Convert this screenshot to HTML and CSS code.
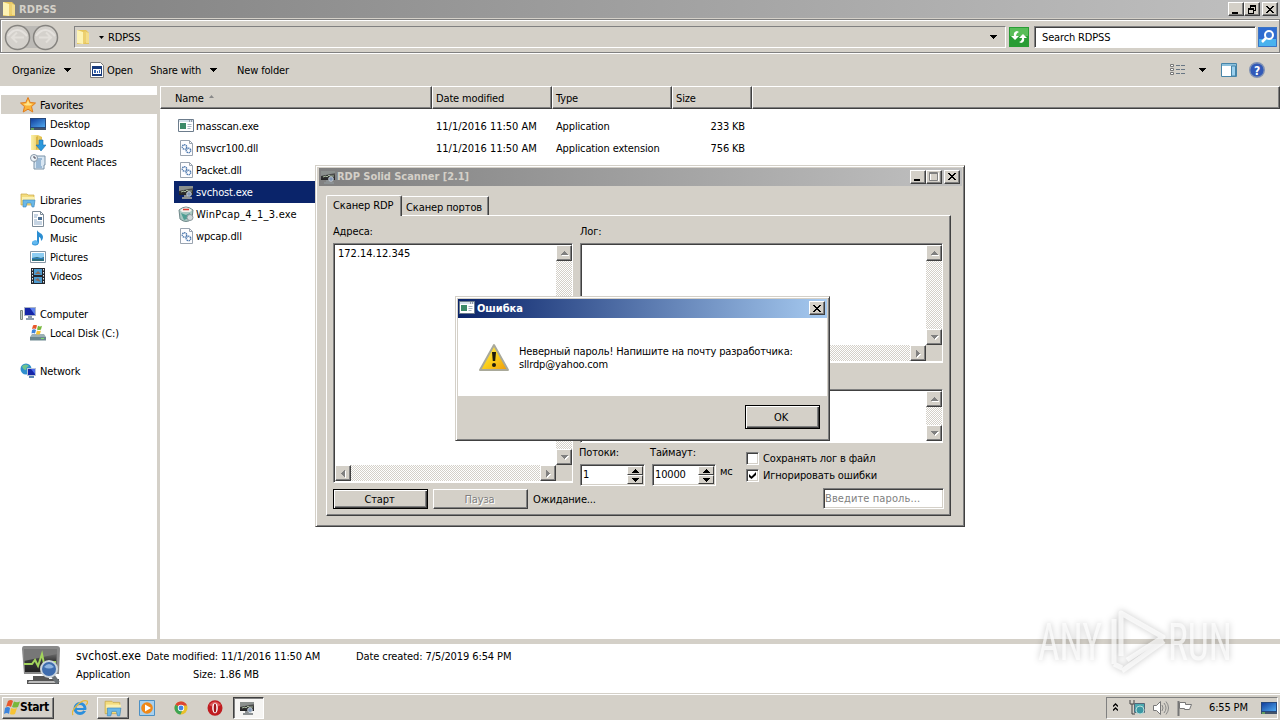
FILE: index.html
```
<!DOCTYPE html>
<html lang="en">
<head>
    <meta charset="UTF-8">
    <title>RDPSS</title>
    <link rel="stylesheet" href="styles.css">
</head>
<body>
    <!-- Shared icons -->
    <svg class="defs" width="0" height="0">
        <linearGradient id="gold" x1="0" y1="0" x2="1" y2="0"><stop offset="0" stop-color="#fbf0a8"/><stop offset="1" stop-color="#e2bd48"/></linearGradient>
        <linearGradient id="blue" x1="0" y1="0" x2="1" y2="1"><stop offset="0" stop-color="#123f9e"/><stop offset="1" stop-color="#4fa8ee"/></linearGradient>
        <linearGradient id="dark" x1="0" y1="0" x2="0" y2="1"><stop offset="0" stop-color="#8d8d8d"/><stop offset=".5" stop-color="#3a3a3a"/><stop offset="1" stop-color="#222"/></linearGradient>
        <symbol id="folder" viewBox="0 0 16 16"><path d="M2 1h9l3 3v11H2z" fill="#e6c55c"/><path d="M2 1l6 2v12l-6-1z" fill="#fdf3b4"/><path d="M8 3l3-1v11l-3 2z" fill="#edd070"/><path d="M11 3l3 1v10h-3z" fill="#f3dd8c"/></symbol>
        <symbol id="star" viewBox="0 0 16 16"><path d="M8 .5l2.200 5 5.300.5-4 3.600 1.300 5.400L8 12.200l-4.800 2.800 1.300-5.400-4-3.600 5.300-.5z" fill="#fbb43a" stroke="#e07c1c"/><path d="M8 3l1.500 3.500 3 .4-2.500 1.600H6L3.500 7l3-.5z" fill="#ffe38a"/></symbol>
        <symbol id="desktop" viewBox="0 0 16 16"><path d="M0 2h16v10H0z" fill="#26487c"/><path d="M1 3h14v8H1z" fill="url(#blue)"/><path d="M0 12h16v2H0z" fill="#42536a"/><path d="M1 12h3v2H1z" fill="#64a060"/></symbol>
        <symbol id="download" viewBox="0 0 16 16"><path d="M1 0h7l4 2v13H1z" fill="url(#gold)"/><path d="M6 2l2-1v12l-2 2z" fill="#d9b545"/><path d="M9 5h4v5h3l-5 6-5-6h3z" fill="#2b98dc" stroke="#1c6fae" stroke-width=".6"/></symbol>
        <symbol id="recent" viewBox="0 0 16 16"><path d="M5 2h10v9h-1v4H4V8h1z" fill="#d8e6f2" stroke="#7a93a8"/><path d="M7 5h5M6 7h5M6 9h5M6 11h5M6 13h6" stroke="#5c8cb8"/><circle cx="4" cy="4" r="3.500" fill="#eef4f8" stroke="#8899a8"/><path d="M4 2v2h2" fill="none" stroke="#445"/></symbol>
        <symbol id="library" viewBox="0 0 16 16"><path d="M1 2h6l1 1h6v10H1z" fill="#f3dc7e" stroke="#c8a848" stroke-width=".7"/><path d="M2 5h13v3H2z" fill="#fbf0b0"/><path d="M3 8h12l-1 7h-2l-1-4H7l-1 4H3z" fill="#69b8e8" stroke="#3f86bc" stroke-width=".6"/></symbol>
        <symbol id="doc" viewBox="0 0 16 16"><path d="M2.500.5h8l3 3v12h-11z" fill="#fff" stroke="#7d8b98"/><path d="M10.500.5v3h3" fill="none" stroke="#7d8b98"/><path d="M4 4h4M4 6h3M4 9h3M4 11h8M4 13h8" stroke="#8da9c6"/><path d="M8 6h4v3H8z" fill="#4a6f94"/></symbol>
        <symbol id="music" viewBox="0 0 16 16"><path d="M7 0c1 3 6 3 6 7 0 2-1 3-2 4 0-3-1-4-2-4v5c0 5-8 4-7 1 .5-2 3-3 5-2z" fill="#2b8ed2"/><ellipse cx="5" cy="12.500" rx="2.800" ry="2" fill="#62b8ef"/></symbol>
        <symbol id="picture" viewBox="0 0 16 16"><path d="M.5 2.500h15v11H.5z" fill="#fff" stroke="#8696a4"/><path d="M2 4h12v8H2z" fill="#8ecdf2"/><path d="M2 9l5-1 4 1 3-1v4H2z" fill="#2e6f7c"/><path d="M2 9h12v1H2z" fill="#2d7cba"/></symbol>
        <symbol id="video" viewBox="0 0 16 16"><path d="M1 0h14v16H1z" fill="#23262c"/><path d="M4 1h8v6H4zM4 9h8v6H4z" fill="#4c9bd0"/><path d="M5 6l3-3 3 3zM5 12l3-2 3 4z" fill="#8c6a58"/><path d="M2.500 1v15M13.500 1v15" stroke="#e8ecf0" stroke-dasharray="1.500 1.500"/></symbol>
        <symbol id="computer" viewBox="0 0 16 16"><path d="M.5 4.500h2v9h-2z" fill="#c2cbc8" stroke="#7d8a80"/><path d="M4 1h12v9H4z" fill="#aab4c6"/><path d="M5 2h10v7H5z" fill="#1526a8"/><path d="M10 2h5v7z" fill="#5c80ec"/><path d="M8 10h4v2h2v2H6v-2h2z" fill="#8c9cae"/></symbol>
        <symbol id="disk" viewBox="0 0 16 16"><path d="M2 9h12l2 3v3H0v-3z" fill="#9cb0b6"/><path d="M0 12h16v3.500H0z" fill="#6c8890"/><path d="M11 13h3v1h-3z" fill="#7ce06c"/><path d="M3 .5q2-1.500 4 0L6 4Q4 3 2 4z" fill="#e8582c"/><path d="M8 .8q2 1.200 4 0L11 4.500Q9 5.500 7 4.500z" fill="#78b83c"/><path d="M2 5q2-1.500 4 0L5 8.500Q3 7.500 1.500 8.500z" fill="#3c84dc"/><path d="M7 5.500q2 1.200 4 0L10 9Q8 10 6 9z" fill="#f6c334"/></symbol>
        <symbol id="network" viewBox="0 0 16 16"><circle cx="6" cy="6" r="5.500" fill="#2f8fce"/><path d="M2 3q4-3 7 0-3 1-3 4-3 0-4-4z" fill="#6fc58e"/><path d="M7 5h9v8H7z" fill="#b8c4d8"/><path d="M8 6h7v6H8z" fill="#1526a8"/><path d="M11 6h4v5z" fill="#4c6cec"/><path d="M9 13h5v2H9z" fill="#5c86b4"/></symbol>
        <symbol id="exe" viewBox="0 0 16 16"><path d="M.5 1.500h15v12H.5z" fill="#fff" stroke="#6c7c8c"/><path d="M1 2h14v2H1z" fill="#d4e0ea"/><path d="M11 3h3" stroke="#556" stroke-dasharray="1 1"/><path d="M2 5h6v6H2z" fill="#3c8a68"/><path d="M9.500 6.500h4M9.500 8.500h4M9.500 10.500h3" stroke="#a6b4bf"/></symbol>
        <symbol id="dll" viewBox="0 0 16 16"><path d="M2.500.5h9l3 3v12h-12z" fill="#fdfdff" stroke="#9aa4b0"/><path d="M11.500.5v3h3" fill="none" stroke="#9aa4b0"/><g fill="none" stroke="#4a76ac" stroke-width="1.500"><circle cx="6.500" cy="7" r="2.200" stroke-dasharray="1.200 .6"/><circle cx="10.500" cy="10.500" r="2.200" stroke-dasharray="1.200 .6"/></g></symbol>
        <symbol id="scan" viewBox="0 0 16 16"><path d="M1 2h14v9H1z" fill="url(#dark)"/><path d="M1 2h14v2L1 7z" fill="#8b908d"/><path d="M3 8l3-1 1 1 2-2 1 1h4" fill="none" stroke="#a4b89c"/><path d="M6 11h4v2h4v2H4v-2h2z" fill="#8b9092"/><circle cx="11" cy="10" r="2.300" fill="#8096b4" stroke="#c4ccd4"/></symbol>
        <symbol id="pcap" viewBox="0 0 16 16"><path d="M1 4q7-6 14 0l-1 9q-6 5-12 0z" fill="#a9c8c2" stroke="#70888a"/><path d="M2 4q6-5 12 0l-2 2H4z" fill="#f4f0ec"/><path d="M5 3.500h6" stroke="#d8392d" stroke-width="1.500"/><path d="M3 7l5 2 4-2-1 5-5 2z" fill="#4f9e93"/><circle cx="12" cy="11.500" r="3" fill="#d2d9db" stroke="#8f9ca0"/></symbol>
        <symbol id="up" viewBox="0 0 7 4"><path d="M3 0h1v1h1v1h1v1h1v1H0V3h1V2h1V1h1z" fill="currentColor"/></symbol>
        <symbol id="down" viewBox="0 0 7 4"><path d="M0 0h7v1H6v1H5v1H4v1H3V3H2V2H1V1H0z" fill="currentColor"/></symbol>
        <symbol id="left" viewBox="0 0 4 7"><path d="M0 3v1h1v1h1v1h1v1h1V0H3v1H2v1H1v1z" fill="currentColor"/></symbol>
        <symbol id="right" viewBox="0 0 4 7"><path d="M4 3v1H3v1H2v1H1v1H0V0h1v1h1v1h1v1z" fill="currentColor"/></symbol>
        <symbol id="close" viewBox="0 0 8 7"><path d="M0 0h2v1h1v1h2V1h1V0h2v1H7v1H6v1H5v1h1v1h1v1h1v1H6V6H5V5H3v1H2v1H0V6h1V5h1V4h1V3H2V2H1V1H0z" fill="#000"/></symbol>
    </svg>

    <!-- Explorer -->
    <div class="title-bar explorer-title">
        <svg class="icon"><use href="#folder"/></svg>
        <span class="title-text">RDPSS</span>
        <span class="win-btn"><svg width="10" height="9"><path d="M1 7h6v2H1z"/></svg></span>
        <span class="win-btn"><svg width="10" height="9"><path d="M3 0h6v6H7V5h1V2H4v1H3zM1 3h6v6H1zM2 5v3h4V5z" fill-rule="evenodd"/></svg></span>
        <span class="win-btn gap"><svg width="8" height="7"><use href="#close"/></svg></span>
    </div>

    <div class="address-bar">
        <div class="nav">
            <svg width="56" height="27">
                <path d="M13 2h30v22H13z" fill="#bcbab6"/>
                <g fill="#d4d1cc" stroke="#85837f" stroke-width="1.500"><circle cx="13.500" cy="13.500" r="12"/><circle cx="41.500" cy="13.500" r="12"/></g>
                <path d="M4 12q9-12 19 0M32 12q9-12 19 0" fill="none" stroke="#e4e1dd" stroke-width="2"/>
                <path d="M20 13.500H8m5-5l-5 5 5 5M35 13.500h12m-5-5l5 5-5 5" fill="none" stroke="#e2dfda" stroke-width="2"/>
            </svg>
        </div>
        <div class="path">
            <svg class="icon"><use href="#folder"/></svg>
            <svg class="arrow" width="5" height="3"><path d="M0 0h5L2.500 3z"/></svg>
            <span>RDPSS</span>
            <svg class="arrow last" width="7" height="4"><use href="#down"/></svg>
        </div>
        <div class="refresh">
            <svg width="20" height="20"><path d="M0 0h20v20H0z" fill="#289c34"/><path d="M1 1h18v8H1z" fill="#58bd58"/><path d="M8 4q-4 1-3 5H2l4 4 4-4H7q0-3 3-4zM12 16q4-1 3-5h3l-4-4-4 4h3q0 3-3 4z" fill="#fff"/></svg>
        </div>
        <div class="search">Search RDPSS</div>
        <svg class="search-btn" width="19" height="20"><path d="M0 0h19v20H0z" fill="#2e6bd0"/><path d="M0 12h19v8H0z" fill="#49b2ee"/><path d="M.5.5h18v19H.5z" fill="none" stroke="#3b74c4"/><circle cx="11" cy="8" r="4" fill="#3c78d4" stroke="#fff" stroke-width="2"/><path d="M8 11l-4 4" stroke="#fff" stroke-width="2.500"/></svg>
    </div>

    <div class="command-bar">
        <span class="organize">Organize</span>
        <svg width="7" height="4"><use href="#down"/></svg>
        <svg class="open-icon" width="14" height="16"><path d="M.5.5h10l3 3v12H.5z" fill="#fff" stroke="#777"/><path d="M2 4h10v10H2z" fill="#173a7c"/><path d="M3 7h8v5H3z" fill="#fff"/><path d="M4 8h2v3H4zM7 9h1v2H7zM9 8h1v3H9z" fill="#3564b0"/></svg>
        <span class="open">Open</span>
        <span class="share">Share with</span>
        <svg width="7" height="4"><use href="#down"/></svg>
        <span class="new-folder">New folder</span>
        <svg class="view-icon" width="16" height="12"><g fill="#fff" stroke="#777"><path d="M.5.5h3v2h-3zM.5 4.500h3v2h-3zM.5 8.500h3v2h-3z"/></g><path d="M6 1.500h4m1 0h4M6 5.500h4m1 0h4M6 9.500h4m1 0h4" stroke="#687684"/></svg>
        <svg class="view-arrow" width="7" height="4"><use href="#down"/></svg>
        <svg class="pane-icon" width="16" height="14"><path d="M.5.5h15v13H.5z" fill="#fff" stroke="#4684a8"/><path d="M1 1h14v2H1z" fill="#8bc0dc"/><path d="M10.500 3h4v10h-4z" fill="#9bd0ee" stroke="#4684a8"/></svg>
        <svg class="help-icon" width="16" height="16"><circle cx="8" cy="8" r="7.300" fill="#3159b8" stroke="#8293b4" stroke-width="1.400"/><text x="8" y="12.500" text-anchor="middle" fill="#fff">?</text></svg>
    </div>

    <div class="explorer">
        <div class="sidebar">
            <div class="nav-row top selected"><svg class="icon"><use href="#star"/></svg>Favorites</div>
            <div class="nav-row"><svg class="icon"><use href="#desktop"/></svg>Desktop</div>
            <div class="nav-row"><svg class="icon"><use href="#download"/></svg>Downloads</div>
            <div class="nav-row"><svg class="icon"><use href="#recent"/></svg>Recent Places</div>
            <div class="nav-row top group"><svg class="icon"><use href="#library"/></svg>Libraries</div>
            <div class="nav-row"><svg class="icon"><use href="#doc"/></svg>Documents</div>
            <div class="nav-row"><svg class="icon"><use href="#music"/></svg>Music</div>
            <div class="nav-row"><svg class="icon"><use href="#picture"/></svg>Pictures</div>
            <div class="nav-row"><svg class="icon"><use href="#video"/></svg>Videos</div>
            <div class="nav-row top group"><svg class="icon"><use href="#computer"/></svg>Computer</div>
            <div class="nav-row"><svg class="icon"><use href="#disk"/></svg>Local Disk (C:)</div>
            <div class="nav-row top group"><svg class="icon"><use href="#network"/></svg>Network</div>
        </div>
        <div class="files">
            <div class="file-head">
                <div class="col-name">Name <svg width="5" height="3"><path d="M2.500 0L5 3H0z" fill="#888"/></svg></div>
                <div class="col-date">Date modified</div>
                <div class="col-type">Type</div>
                <div class="col-size">Size</div>
                <div class="col-rest"></div>
            </div>
            <div class="file-row"><svg class="icon"><use href="#exe"/></svg><span class="f-name">masscan.exe</span><span class="f-date">11/1/2016 11:50 AM</span><span class="f-type">Application</span><span class="f-size">233 KB</span></div>
            <div class="file-row"><svg class="icon"><use href="#dll"/></svg><span class="f-name">msvcr100.dll</span><span class="f-date">11/1/2016 11:50 AM</span><span class="f-type">Application extension</span><span class="f-size">756 KB</span></div>
            <div class="file-row"><svg class="icon"><use href="#dll"/></svg><span class="f-name">Packet.dll</span></div>
            <div class="file-row active"><svg class="icon"><use href="#scan"/></svg><span class="f-name">svchost.exe</span></div>
            <div class="file-row"><svg class="icon"><use href="#pcap"/></svg><span class="f-name pcap">WinPcap_4_1_3.exe</span></div>
            <div class="file-row"><svg class="icon"><use href="#dll"/></svg><span class="f-name">wpcap.dll</span></div>
        </div>
    </div>

    <div class="details">
        <svg width="40" height="40" viewBox="0 0 40 40">
            <path d="M3 0h33q3 0 3 3l-1 25H3L1 3q0-3 2-3z" fill="#8a8a8a"/>
            <path d="M3 3h33l-1 23H4z" fill="url(#dark)"/>
            <path d="M3 3h33v5L3 15z" fill="#777"/>
            <path d="M3 18h8l3-4 3 6 4-12 3 14 3-6h8" fill="none" stroke="#a3d45c" stroke-width="2"/>
            <path d="M12 30h16v3h10v5H6v-4h6z" fill="#555"/><path d="M8 35h28v2H7z" fill="#bbb"/>
            <path d="M32 30l5 7" stroke="#6a7074" stroke-width="4"/>
            <circle cx="28" cy="23" r="8" fill="#3e6cae" stroke="#cbd4dc" stroke-width="2"/>
            <path d="M23 21q5-6 10 0-5 3-10 0z" fill="#8fb4e0"/>
        </svg>
        <div class="details-text">
            <div><span class="big">svchost.exe</span><span class="modified">Date modified: 11/1/2016 11:50 AM</span><span class="created">Date created: 7/5/2019 6:54 PM</span></div>
            <div class="second"><span class="kind">Application</span><span>Size: 1.86 MB</span></div>
        </div>
    </div>

    <!-- Taskbar -->
    <div class="taskbar">
        <div class="start"><svg width="16" height="15"><path d="M4 1q3-2 5 0L7 7Q4 5 2 7z" fill="#e8582c"/><path d="M10 1.500q3 1.500 6 0L14 7q-3 1-6 0z" fill="#78b83c"/><path d="M1 8q3-2 5 0l-1 6q-2-2-5 0z" fill="#3c84dc"/><path d="M7 8q3 1.500 6 0l-2 6q-3 1-5 0z" fill="#f6c334"/></svg>Start</div>
        <div class="task ie"><svg class="icon"><circle cx="8" cy="8.500" r="5" fill="none" stroke="#2c8fdc" stroke-width="3"/><path d="M4 8h9v2H4z" fill="#2c8fdc"/><path d="M12 10h3v1h-4z" fill="#d4d0c8"/><path d="M1 15C-2 11 9-1 15 1c1 1 0 3-1 4" fill="none" stroke="#e8b838" stroke-width="1.300"/></svg></div>
        <div class="task raised"><svg width="18" height="18"><use href="#library"/></svg></div>
        <div class="task"><svg class="icon"><path d="M.5.5h15v15H.5z" fill="#a8d0ee" stroke="#4c90c4"/><circle cx="8" cy="8" r="5.800" fill="#f08818"/><path d="M6 4.500l6 3.500-6 3.500z" fill="#fff"/></svg></div>
        <div class="task"><svg class="icon" viewBox="0 0 16 16"><circle cx="8" cy="8" r="6.500" fill="#e8c02c"/><path d="M8 8L2.400 4.700A6.500 6.500 0 0 1 14 5.500H8z" fill="#dc4434"/><path d="M8 8L2.400 4.700A6.500 6.500 0 0 0 7.500 14.500L10 9z" fill="#3da454"/><circle cx="8" cy="8" r="3.200" fill="#fff"/><circle cx="8" cy="8" r="2.400" fill="#4283e4"/></svg></div>
        <div class="task"><svg class="icon"><ellipse cx="8" cy="8" rx="7.500" ry="7.800" fill="#c01c20"/><path d="M2 5q6-7 12 0-6 4-12 0z" fill="#dc5858"/><ellipse cx="8" cy="8" rx="2.800" ry="5.300" fill="#fff"/><ellipse cx="8" cy="8" rx="1.300" ry="4.500" fill="#a01418"/></svg></div>
        <div class="task pressed"><svg class="icon"><use href="#scan"/></svg></div>
        <div class="tray">
            <svg class="chevrons" width="5" height="9"><path d="M0 3.500L2.500 1 5 3.500M0 7.500L2.500 5 5 7.500" fill="none" stroke="#000" stroke-width="1.300"/></svg>
            <svg class="icon"><path d="M1 0v4h4V0M3 4v10h3" fill="none" stroke="#444"/><path d="M5.500 3.500h10v9h-10z" fill="#4ba8b0" stroke="#567"/><circle cx="11" cy="10" r="4" fill="#3c98a4" stroke="#b8dcd8"/></svg>
            <svg class="icon speaker"><path d="M.5 5.500h3l4-4v13l-4-4h-3z" fill="#fff" stroke="#777"/><path d="M9 5q2 3 0 6M11 3q4 5 0 10M13 1.500q5 6.500 0 13" fill="none" stroke="#888"/></svg>
            <svg class="icon flag"><path d="M1.500 1v15" stroke="#777" stroke-width="2"/><path d="M2.500 2.500h6v2h6l-2 5h-5v-1h-5z" fill="#fff" stroke="#777"/></svg>
            <span class="clock">6:55 PM</span>
            <svg class="show-desktop icon"><use href="#desktop"/></svg>
        </div>
    </div>

    <!-- Scanner window -->
    <div class="window scanner">
        <div class="title-bar">
            <svg class="icon"><use href="#scan"/></svg>
            <span class="title-text">RDP Solid Scanner [2.1]</span>
            <span class="win-btn"><svg width="10" height="9"><path d="M1 7h6v2H1z"/></svg></span>
            <span class="win-btn"><svg width="10" height="9"><path d="M1.500 1h8v8h-8z" fill="none" stroke="#fff"/><path d="M.5.5h8v8h-8zM.5 1.500h8" fill="none" stroke="#808080"/></svg></span>
            <span class="win-btn gap"><svg width="8" height="7"><use href="#close"/></svg></span>
        </div>
        <div class="tabs">
            <div class="tab current">Сканер RDP</div>
            <div class="tab">Сканер портов</div>
        </div>
        <div class="panel">
            <div class="columns">
                <div class="left">
                    <div class="caption">Адреса:</div>
                    <div class="edit addresses">
                        <div class="edit-text">172.14.12.345</div>
                        <div class="vbar"><i class="sb"><svg width="7" height="4"><use href="#up"/></svg></i><i class="sb"><svg width="7" height="4"><use href="#down"/></svg></i></div>
                        <div class="hbar"><i class="sb"><svg width="4" height="7"><use href="#left"/></svg></i><i class="sb"><svg width="4" height="7"><use href="#right"/></svg></i></div>
                        <div class="corner"></div>
                    </div>
                </div>
                <div class="right">
                    <div class="caption">Лог:</div>
                    <div class="edit log">
                        <div class="edit-text"></div>
                        <div class="vbar"><i class="sb"><svg width="7" height="4"><use href="#up"/></svg></i><i class="sb"><svg width="7" height="4"><use href="#down"/></svg></i></div>
                        <div class="hbar"><i class="sb"><svg width="4" height="7"><use href="#left"/></svg></i><i class="sb"><svg width="4" height="7"><use href="#right"/></svg></i></div>
                        <div class="corner"></div>
                    </div>
                    <div class="edit result">
                        <div class="edit-text"></div>
                        <div class="vbar"><i class="sb"><svg width="7" height="4"><use href="#up"/></svg></i><i class="sb"><svg width="7" height="4"><use href="#down"/></svg></i></div>
                    </div>
                    <div class="options">
                        <div class="field threads"><span>Потоки:</span>
                            <div class="spin">1<div class="spin-btns"><i><svg width="7" height="4"><use href="#up"/></svg></i><i><svg width="7" height="4"><use href="#down"/></svg></i></div></div>
                        </div>
                        <div class="field timeout"><span>Таймаут:</span>
                            <div class="spin">10000<div class="spin-btns"><i><svg width="7" height="4"><use href="#up"/></svg></i><i><svg width="7" height="4"><use href="#down"/></svg></i></div></div>
                        </div>
                        <span class="ms">мс</span>
                        <div class="checks">
                            <div class="check"><i class="box"></i>Сохранять лог в файл</div>
                            <div class="check"><i class="box"><svg width="7" height="7"><path d="M0 2l2.500 2.500L7 0v3L2.500 7 0 5z"/></svg></i>Игнорировать ошибки</div>
                        </div>
                    </div>
                </div>
            </div>
            <div class="actions">
                <div class="button default">Старт</div>
                <div class="button disabled">Пауза</div>
                <span class="status">Ожидание...</span>
                <div class="password">Введите пароль...</div>
            </div>
        </div>
    </div>

    <!-- Error message -->
    <div class="window dialog">
        <div class="title-bar">
            <svg class="icon"><use href="#exe"/></svg>
            <span class="title-text">Ошибка</span>
            <span class="win-btn"><svg width="8" height="7"><use href="#close"/></svg></span>
        </div>
        <div class="message">
            <svg width="32" height="29">
                <linearGradient id="warn" x1="0" y1="0" x2="1" y2="1"><stop offset="0" stop-color="#fff07a"/><stop offset=".5" stop-color="#fbd01c"/><stop offset="1" stop-color="#ee9a0c"/></linearGradient>
                <path d="M16 2L30 27H2z" fill="url(#warn)" stroke="#a9a99a" stroke-width="2" stroke-linejoin="round"/>
                <path d="M14 9h4l-.8 9h-2.400z" fill="#1e1a0c"/><circle cx="16" cy="22" r="2" fill="#1e1a0c"/>
            </svg>
            <p>Неверный пароль! Напишите на почту разработчика:<br><span>sllrdp@yahoo.com</span></p>
        </div>
        <div class="dialog-foot"><div class="button default">OK</div></div>
    </div>

    <svg class="watermark" width="240" height="80">
        <g class="mark">
            <text x="8" y="58" textLength="64" lengthAdjust="spacingAndGlyphs">ANY</text>
            <text x="138" y="58" textLength="64" lengthAdjust="spacingAndGlyphs">RUN</text>
            <path d="M91 54V11l42 24-36 23M84 17v45M92 69l42-30M84 62l8 4"/>
        </g>
    </svg>
</body>
</html>
```

FILE: styles.css
```
* {
    box-sizing: border-box;
}

body {
    margin: 0;
    width: 1280px;
    height: 720px;
    overflow: hidden;
    display: flex;
    flex-direction: column;
    background: #fff;
    color: #000;
    font-family: "DejaVu Sans Condensed", "DejaVu Sans", sans-serif;
    font-size: 11px;
    line-height: 13px;
    font-stretch: condensed;
    letter-spacing: -0.15px;
    white-space: nowrap;
}

svg {
    display: block;
    flex: none;
}

.defs {
    position: absolute;
}

.icon {
    width: 16px;
    height: 16px;
}

/* Title bars */
.title-bar {
    height: 18px;
    display: flex;
    align-items: center;
    padding: 0 2px 0 1px;
    background: linear-gradient(90deg, #808080, #c0c0c0);
    color: #d4d0c8;
    font-weight: bold;
    letter-spacing: -0.05px;
}

.title-text {
    flex: 1;
    padding-left: 2px;
}

.win-btn {
    width: 16px;
    height: 14px;
    display: flex;
    align-items: center;
    justify-content: center;
    background: #d4d0c8;
    border: 1px solid;
    border-color: #fff #404040 #404040 #fff;
    box-shadow: inset -1px -1px #808080;
}

.win-btn.gap {
    margin-left: 2px;
}

.explorer-title {
    flex: none;
}

.explorer-title .title-text {
    letter-spacing: 0.2px;
}

/* Address bar */
.address-bar {
    height: 36px;
    flex: none;
    display: flex;
    align-items: center;
    padding: 2px 0 0 4px;
    background: #d4d0c8;
    border-top: 1px solid #d4d0c8;
    border-bottom: 1px solid #fff;
    box-shadow: inset 1px 1px #808080, inset -1px -1px #808080, inset 2px 2px #fff;
}

.path {
    width: 932px;
    height: 22px;
    margin-left: 14px;
    display: flex;
    align-items: center;
    border: 1px solid;
    border-color: #808080 #fff #fff #808080;
}

.path .arrow {
    margin: 0 4px 0 8px;
}

.path .last {
    margin: 0 8px 0 auto;
}

.refresh {
    width: 23px;
    padding-left: 3px;
}

.search {
    width: 222px;
    height: 22px;
    margin-left: 5px;
    padding: 4px 0 0 7px;
    background: #fff;
    border: 1px solid;
    border-color: #808080 #fff #fff #808080;
    box-shadow: inset 1px 1px #404040;
}

.search-btn {
    margin-left: 2px;
}

/* Command bar */
.command-bar {
    height: 32px;
    flex: none;
    display: flex;
    align-items: center;
    padding-left: 12px;
    background: #d4d0c8;
}

.organize {
    width: 52px;
}

.open-icon {
    margin-left: 19px;
}

.open {
    width: 43px;
    margin-left: 3px;
}

.share {
    width: 60px;
}

.new-folder {
    margin-left: 20px;
}

.view-icon {
    margin-left: auto;
}

.view-arrow {
    margin: 0 15px 0 13px;
}

.help-icon {
    margin: 0 15px 0 12px;
    font-size: 12px;
    font-weight: bold;
}

/* Explorer body */
.explorer {
    height: 553px;
    flex: none;
    display: flex;
}

.sidebar {
    width: 160px;
    padding: 9px 0 0 1px;
    border-right: 3px solid #d4d0c8;
}

.nav-row {
    height: 19px;
    display: flex;
    align-items: center;
    gap: 4px;
    padding: 1px 0 0 29px;
}

.nav-row.top {
    padding-left: 19px;
}

.nav-row.selected {
    background: #d4d0c8;
}

.nav-row.group {
    margin-top: 19px;
}

.files {
    flex: 1;
}

.file-head {
    height: 23px;
    margin-bottom: 6px;
    display: flex;
}

.file-head div {
    height: 23px;
    padding: 5px 0 0 3px;
    background: #d4d0c8;
    border: 1px solid;
    border-color: #fff #404040 #404040 #fff;
    box-shadow: inset -1px -1px #808080;
}

.file-head .col-name {
    width: 272px;
    padding-left: 14px;
    display: flex;
    gap: 5px;
}

.col-name svg {
    margin-top: 3px;
}

.col-date,
.col-type {
    width: 120px;
}

.col-size {
    width: 80px;
}

.col-rest {
    flex: 1;
}

.file-row {
    height: 22px;
    display: flex;
    align-items: center;
    margin-left: 14px;
    padding-left: 4px;
}

.file-row.active {
    width: 578px;
    background: #0a246a;
    color: #fff;
}

.f-name {
    width: 242px;
    padding-left: 2px;
}

.pcap {
    letter-spacing: 0.25px;
}

.f-date {
    width: 120px;
    letter-spacing: 0;
}

.f-type {
    width: 128px;
}

.f-size {
    width: 61px;
    text-align: right;
}

/* Details pane */
.details {
    height: 54px;
    flex: none;
    display: flex;
    padding: 2px 0 0 21px;
    border-top: 5px solid #d4d0c8;
}

.details-text {
    padding: 1px 0 0 15px;
    letter-spacing: -0.1px;
}

.details-text div {
    height: 19px;
    display: flex;
    align-items: center;
}

.details-text .second {
    height: 17px;
}

.big {
    width: 70px;
    font-size: 12px;
    letter-spacing: 0.1px;
}

.modified {
    width: 210px;
}

.kind {
    width: 117px;
}

/* Taskbar */
.taskbar {
    height: 27px;
    flex: none;
    display: flex;
    align-items: center;
    padding: 1px 0 0 2px;
    background: #d4d0c8;
    border-top: 1px solid #d4d0c8;
    box-shadow: inset 0 1px #fff;
}

.start {
    width: 52px;
    height: 22px;
    margin-right: 11px;
    display: flex;
    align-items: center;
    padding-left: 1px;
    font-weight: bold;
    font-size: 12px;
    letter-spacing: -0.4px;
    border: 1px solid;
    border-color: #fff #404040 #404040 #fff;
    box-shadow: inset -1px -1px #808080;
}

.task {
    width: 32px;
    height: 22px;
    margin-right: 2px;
    display: flex;
    align-items: center;
    justify-content: center;
}

.task.ie {
    width: 30px;
}

.raised {
    border: 1px solid;
    border-color: #fff #404040 #404040 #fff;
    box-shadow: inset -1px -1px #808080;
}

.pressed {
    width: 31px;
    padding-right: 4px;
    background: #f6f5f3;
    border: 1px solid;
    border-color: #404040 #fff #fff #404040;
    box-shadow: inset 1px 1px #808080;
}

.tray {
    width: 172px;
    height: 22px;
    margin: 0 2px 0 auto;
    display: flex;
    align-items: center;
    padding-left: 6px;
    border: 1px solid;
    border-color: #808080 #fff #fff #808080;
}

.chevrons {
    margin-right: 11px;
}

.speaker,
.flag {
    margin-left: 8px;
}

.clock {
    width: 52px;
    margin-left: 16px;
}

/* Windows */
.window {
    position: absolute;
    display: flex;
    flex-direction: column;
    background: #d4d0c8;
    border: 1px solid;
    border-color: #d4d0c8 #404040 #404040 #d4d0c8;
    box-shadow: inset 1px 1px #fff, inset -1px -1px #808080;
    padding: 3px;
}

.scanner {
    left: 315px;
    top: 165px;
    width: 650px;
    height: 362px;
    padding: 2px 2px 3px 3px;
}

.scanner .title-bar {
    padding: 0 2px 1px 1px;
}

.scanner .title-text {
    padding-left: 1px;
}

.tabs {
    height: 29px;
    display: flex;
    align-items: flex-end;
    padding-left: 7px;
}

.tab {
    width: 87px;
    height: 19px;
    padding: 4px 0 0 3px;
    border: 1px solid;
    border-color: #fff #404040 transparent transparent;
    box-shadow: inset -1px 0 #808080;
    border-bottom: none;
    letter-spacing: -0.1px;
}

.tab.current {
    width: 76px;
    height: 21px;
    margin-bottom: -1px;
    padding: 3px 0 0 6px;
    background: #d4d0c8;
    border-left-color: #fff;
    border-radius: 2px 2px 0 0;
    z-index: 1;
}

.panel {
    width: 625px;
    height: 301px;
    margin-left: 7px;
    padding: 9px 6px 0;
    border: 1px solid;
    border-color: #fff #404040 #404040 #fff;
    box-shadow: inset -1px -1px #808080;
}

.columns {
    display: flex;
    gap: 7px;
}

.left {
    width: 240px;
}

.right {
    width: 363px;
}

.caption {
    height: 18px;
}

.edit {
    display: grid;
    grid-template-columns: 1fr 16px;
    grid-template-rows: 1fr 16px;
    background: #fff;
    border: 1px solid;
    border-color: #808080 #fff #fff #808080;
    box-shadow: inset 1px 1px #404040;
    padding: 1px 0 1px 1px;
}

.edit-text {
    padding: 2px 0 0 3px;
}

.addresses {
    height: 240px;
}

.addresses .edit-text {
    letter-spacing: 0;
}

.log {
    height: 120px;
}

.result {
    height: 54px;
    margin-top: 26px;
    grid-template-rows: 1fr;
}

.vbar,
.hbar {
    display: flex;
    justify-content: space-between;
    background: repeating-conic-gradient(#fff 0 25%, #d4d0c8 0 50%) 0 0 / 2px 2px;
}

.vbar {
    flex-direction: column;
}

.corner {
    background: #d4d0c8;
}

.sb {
    width: 16px;
    height: 16px;
    display: flex;
    align-items: center;
    justify-content: center;
    background: #d4d0c8;
    color: #808080;
    border: 1px solid;
    border-color: #fff #404040 #404040 #fff;
    box-shadow: inset -1px -1px #808080;
}

.sb svg {
    filter: drop-shadow(1px 1px #fff);
}

.options {
    display: flex;
    padding-top: 3px;
    height: 45px;
}

.field {
    display: flex;
    flex-direction: column;
    gap: 5px;
}

.field > span {
    margin-left: -1px;
}

.threads {
    width: 71px;
}

.timeout {
    width: 69px;
}

.spin {
    width: 65px;
    height: 22px;
    padding: 3px 0 0 2px;
    display: flex;
    background: #fff;
    border: 1px solid;
    border-color: #808080 #fff #fff #808080;
    box-shadow: inset 1px 1px #404040, inset -1px -1px #d4d0c8;
}

.timeout .spin {
    margin-left: 1px;
    width: 64px;
}

.spin-btns {
    margin: -2px 1px 0 auto;
}

.spin-btns i {
    width: 16px;
    height: 9px;
    display: flex;
    align-items: center;
    justify-content: center;
    background: #d4d0c8;
    border: 1px solid;
    border-color: #fff #404040 #404040 #fff;
}

.ms {
    width: 26px;
    padding-top: 19px;
}

.checks {
    padding-top: 4px;
}

.check {
    height: 17px;
    display: flex;
    align-items: center;
    gap: 4px;
}

.box {
    width: 13px;
    height: 13px;
    display: flex;
    align-items: center;
    justify-content: center;
    background: #fff;
    border: 1px solid;
    border-color: #808080 #fff #fff #808080;
    box-shadow: inset 1px 1px #404040, inset -1px -1px #d4d0c8;
}

.actions {
    display: flex;
    padding-top: 1px;
}

.button {
    width: 95px;
    height: 20px;
    padding-top: 3px;
    text-align: center;
    background: #d4d0c8;
    border: 1px solid;
    border-color: #fff #404040 #404040 #fff;
    box-shadow: inset -1px -1px #808080;
}

.button.default {
    border-color: #000;
    box-shadow: inset 1px 1px #fff, inset -1px -1px #404040, inset -2px -2px #808080;
}

.actions .button {
    padding-right: 2px;
}

.button.disabled {
    margin-left: 5px;
    color: #808080;
    text-shadow: 1px 1px #fff;
}

.status {
    padding: 4px 0 0 5px;
}

.password {
    width: 121px;
    height: 21px;
    margin: -1px 0 0 auto;
    padding: 3px 0 0 1px;
    background: #fff;
    color: #808080;
    border: 1px solid;
    border-color: #808080 #fff #fff #808080;
    box-shadow: inset 1px 1px #404040, inset -1px -1px #d4d0c8;
    letter-spacing: 0.1px;
}

/* Error dialog */
.dialog {
    left: 455px;
    top: 296px;
    width: 375px;
    height: 145px;
    padding: 2px;
}

.dialog .title-bar {
    height: 19px;
    padding-bottom: 1px;
    background: linear-gradient(90deg, #0a246a, #a6caf0);
    color: #fff;
}

.message {
    height: 78px;
    display: flex;
    align-items: center;
    padding-left: 20px;
    background: #fff;
}

.message p {
    margin: 1px 0 0 9px;
}

.dialog-foot {
    display: flex;
    justify-content: flex-end;
    padding: 9px 7px 0 0;
}

.dialog-foot .button {
    width: 75px;
    height: 24px;
    padding: 5px 3px 0 0;
}

/* Watermark */
.watermark {
    position: absolute;
    left: 1030px;
    top: 602px;
}

.mark {
    filter: drop-shadow(0 0 3px rgba(0, 0, 0, 0.3));
}

.mark text {
    fill: #fff;
    fill-opacity: 0.7;
    font-family: Roboto, sans-serif;
    font-size: 52px;
    letter-spacing: 0;
}

.mark path {
    fill: none;
    stroke: #fff;
    stroke-opacity: 0.7;
    stroke-width: 5;
    stroke-linejoin: round;
}
```
